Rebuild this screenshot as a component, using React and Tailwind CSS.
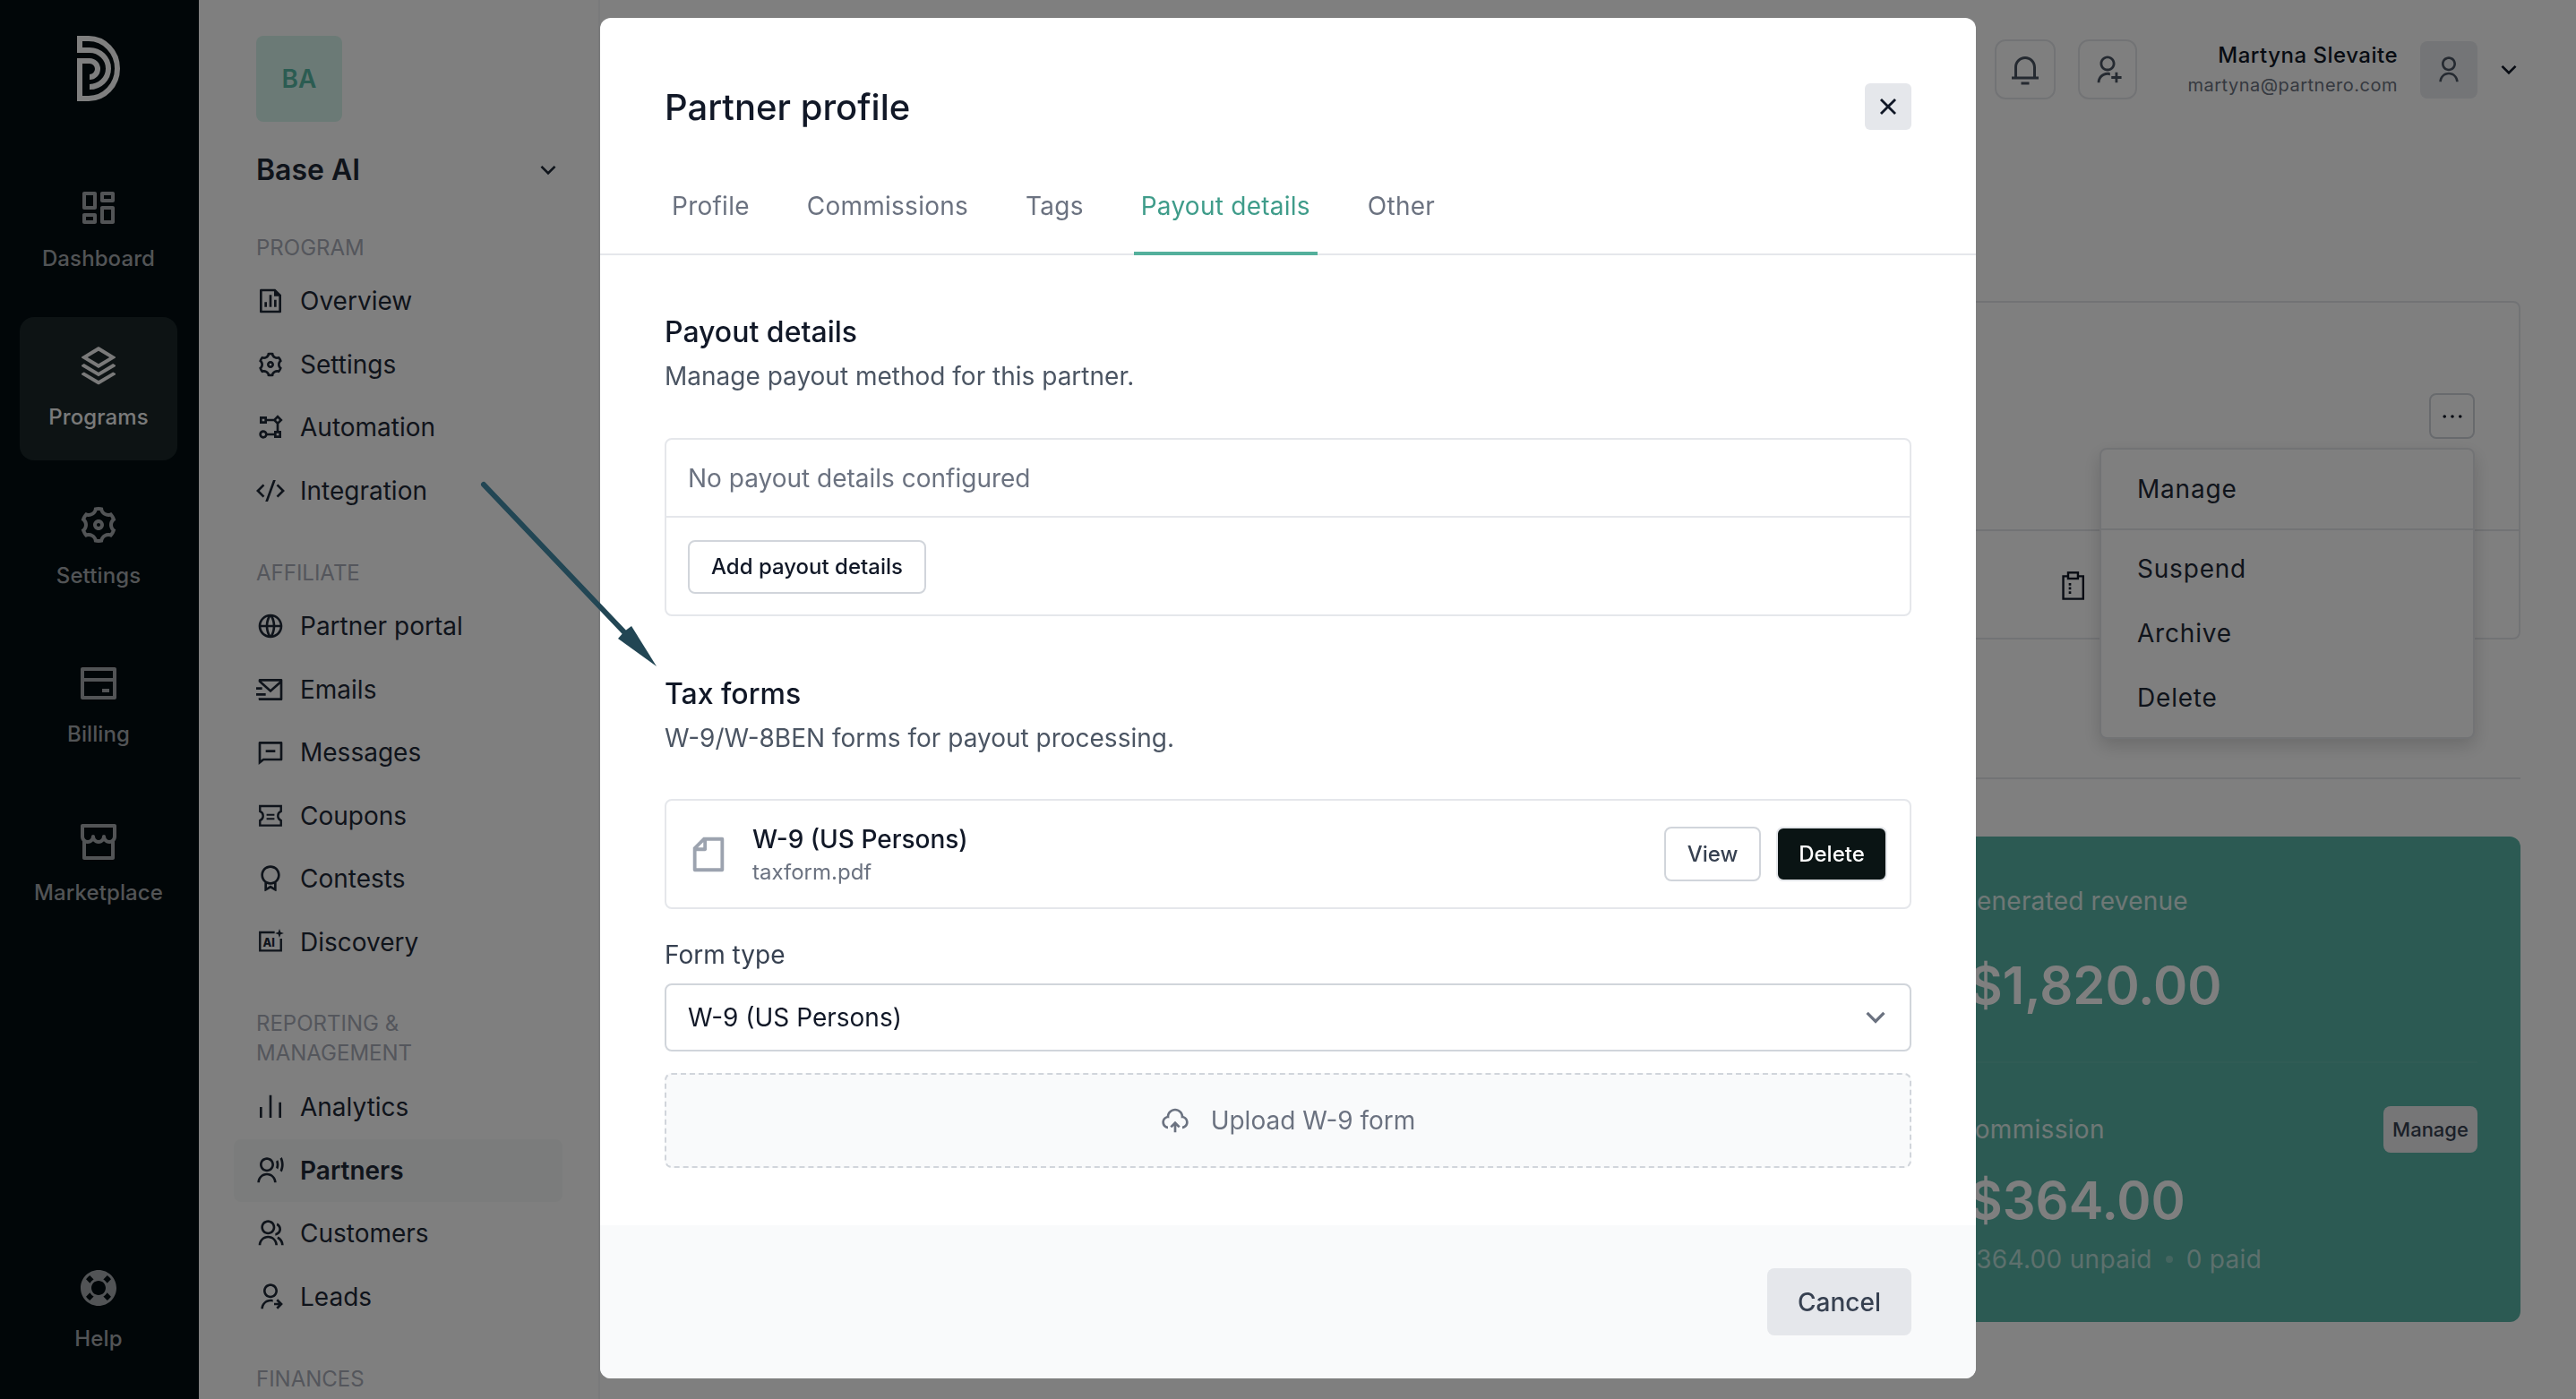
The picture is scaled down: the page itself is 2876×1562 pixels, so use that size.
import React from "react";
import {
  RiDashboardLine, RiStackLine, RiBankCardLine, RiStoreLine, RiLifebuoyFill,
  RiFileChartLine, RiSettings3Line, RiFlowChart, RiCodeSSlashLine, RiGlobalLine, RiMailSendLine,
  RiMessageLine, RiAwardLine, RiBarChartLine, RiUserVoiceLine, RiGroupLine,
  RiUserSharedLine, RiNotification3Line, RiUserAddLine, RiUserLine, RiArrowDownSLine, RiCloseLine,
  RiMoreLine, RiFileLine, RiUploadCloud2Line,
} from "react-icons/ri";

const Logo = () => (
  <svg width="48" height="73" viewBox="0 0 48 73" fill="none" stroke="#ffffff" strokeWidth="6">
    <path d="M13 3H3V16H14A21 20.5 0 0 1 14 57" />
    <path d="M13 3A32 33.5 0 0 1 13 70H3V28H14A9 9 0 0 1 14 46" />
  </svg>
);

const AiIcon = () => (
  <svg width="32" height="32" viewBox="0 0 24 24">
    <path d="M15.5 3.8H3.2V19H20.8V9" fill="none" stroke="currentColor" strokeWidth="1.8" />
    <path d="M19.5 0.8l1 2.7 2.7 1-2.7 1-1 2.7-1-2.7-2.7-1 2.7-1z" fill="currentColor" />
    <text x="5.6" y="15.6" fontSize="9.5" fontWeight="800" fill="currentColor" fontFamily="Inter, sans-serif">AI</text>
  </svg>
);

const CouponIcon = () => (
  <svg width="32" height="32" viewBox="0 0 24 24" fill="none" stroke="currentColor" strokeWidth="1.8">
    <path d="M3.2 3.8H20.8V8.2C19.2 8.8 18.2 10.2 18.2 12S19.2 15.2 20.8 15.8V20H3.2V15.8C4.8 15.2 5.8 13.8 5.8 12S4.8 8.8 3.2 8.2Z" />
    <path d="M8.7 11.1H15.3M8.7 14.4H15.3" strokeWidth="1.6" />
  </svg>
);

const ClipboardIcon = () => (
  <svg width="32" height="32" viewBox="0 0 24 24" fill="none" stroke="currentColor" strokeWidth="1.8">
    <path d="M7.5 4H3.4V23H20.1V4H15.8" />
    <rect x="7.5" y="1" width="8.2" height="5" />
    <path d="M8 10.8h2M8 14.2h2M8 17.7h2" strokeWidth="2" />
  </svg>
);

const railItems = [
  [RiDashboardLine, "Dashboard"],
  [RiStackLine, "Programs", true],
  [RiSettings3Line, "Settings"],
  [RiBankCardLine, "Billing"],
  [RiStoreLine, "Marketplace"],
];

const RailItem = ({ icon: Icon, label, active }) => (
  <div className={`w-[176px] h-[160px] rounded-[16px] flex flex-col items-center pt-[31px] ${active ? "bg-[#1a2729] text-[#f4f4f4]" : "text-[#a4a8ac]"}`}>
    <Icon size={48} />
    <span className="mt-[17px] text-[24px] leading-[32px] font-medium tracking-[0.1px]">{label}</span>
  </div>
);

const SectionLabel = ({ children, className = "" }) => (
  <div className={`pl-[25px] text-[24px] leading-[33px] text-[#a9adb8] uppercase ${className}`}>{children}</div>
);

const NavItem = ({ icon: Icon, label, active }) => (
  <div className={`h-[70.5px] px-[25px] flex items-center gap-[17px] rounded-[8px] text-[28px] text-[#1f2937] ${active ? "bg-[#f7f9f8] font-semibold" : ""}`}>
    <span className="w-[32px] h-[32px] shrink-0 flex items-center justify-center"><Icon size={32} /></span>
    <span>{label}</span>
  </div>
);

const Sidebar = () => (
  <aside className="w-[448px] shrink-0 h-full border-r-2 border-[#f3f4f6] bg-white overflow-hidden">
    <div className="pl-[64px] pt-[40px]">
      <div className="w-[96px] h-[96px] rounded-[8px] bg-[#d6f5ec] flex items-center justify-center text-[#56b8a4] text-[28px] font-semibold">BA</div>
    </div>
    <div className="mt-[34px] pl-[64px] pr-[40px] flex items-center justify-between h-[40px]">
      <span className="text-[32px] font-semibold text-[#1f2937]">Base AI</span>
      <RiArrowDownSLine size={32} className="text-[#1f2937]" />
    </div>
    <div className="ml-[39px] mr-[40px] mt-[50px]">
      <SectionLabel className="mb-[8px]">Program</SectionLabel>
      <NavItem icon={RiFileChartLine} label="Overview" />
      <NavItem icon={RiSettings3Line} label="Settings" />
      <NavItem icon={RiFlowChart} label="Automation" />
      <NavItem icon={RiCodeSSlashLine} label="Integration" />
      <SectionLabel className="mt-[40px] mb-[8px]">Affiliate</SectionLabel>
      <NavItem icon={RiGlobalLine} label="Partner portal" />
      <NavItem icon={RiMailSendLine} label="Emails" />
      <NavItem icon={RiMessageLine} label="Messages" />
      <NavItem icon={CouponIcon} label="Coupons" />
      <NavItem icon={RiAwardLine} label="Contests" />
      <NavItem icon={AiIcon} label="Discovery" />
      <SectionLabel className="mt-[39px] mb-[9px]">Reporting &<br />Management</SectionLabel>
      <NavItem icon={RiBarChartLine} label="Analytics" />
      <NavItem icon={RiUserVoiceLine} label="Partners" active />
      <NavItem icon={RiGroupLine} label="Customers" />
      <NavItem icon={RiUserSharedLine} label="Leads" />
      <SectionLabel className="mt-[40px]">Finances</SectionLabel>
    </div>
  </aside>
);

const Header = () => (
  <header className="h-[336px] pt-[44px] pr-[59px] flex justify-end items-start">
    <div className="flex items-center">
      <button className="w-[68px] h-[67px] rounded-[12px] border-2 border-[#e5e7eb] flex items-center justify-center text-[#4b5563]"><RiNotification3Line size={36} /></button>
      <button className="ml-[25px] w-[66px] h-[67px] rounded-[12px] border-2 border-[#e5e7eb] flex items-center justify-center text-[#4b5563]"><RiUserAddLine size={34} /></button>
      <div className="ml-[56px] flex flex-col items-end">
        <span className="text-[24px] leading-[34px] font-medium text-[#111827] tracking-[0.5px]">Martyna Slevaite</span>
        <span className="text-[20px] leading-[32px] text-[#6b7280] tracking-[0.5px]">martyna@partnero.com</span>
      </div>
      <div className="ml-[25px] w-[64px] h-[64px] rounded-[8px] bg-[#e8eaee] flex items-center justify-center text-[#4b5563]"><RiUserLine size={32} /></div>
      <RiArrowDownSLine size={32} className="ml-[19px] text-[#111827]" />
    </div>
  </header>
);

const Dropdown = () => (
  <div className="absolute top-[162px] right-[49px] w-[419px] h-[325px] rounded-[8px] border-2 border-[#e5e7eb] bg-white shadow-[0_8px_20px_rgba(0,0,0,0.16)] text-[28px] text-[#1f2937] tracking-[0.8px]">
    <div className="h-[88px] px-[40px] flex items-center border-b-2 border-[#e5e7eb] box-content">Manage</div>
    <div className="pt-[7px]">
      <div className="h-[72px] px-[40px] flex items-center">Suspend</div>
      <div className="h-[72px] px-[40px] flex items-center">Archive</div>
      <div className="h-[72px] px-[40px] flex items-center">Delete</div>
    </div>
  </div>
);

const Main = () => (
  <main className="flex-1 h-full overflow-hidden bg-white">
    <Header />
    <div className="pr-[62px]">
      <div className="relative w-[1100px] ml-auto h-[378px] rounded-[8px] border-2 border-[#e5e7eb]">
        <div className="h-[255px] border-b-2 border-[#e5e7eb] pt-[101px] pr-[49px] flex justify-end items-start">
          <button className="w-[51px] h-[51px] rounded-[8px] border-2 border-[#d1d5db] flex items-center justify-center text-[#111827]"><RiMoreLine size={28} /></button>
        </div>
        <div className="pt-[45px] pl-[583px] text-[#111827]"><ClipboardIcon /></div>
        <Dropdown />
      </div>
      <div className="w-[1100px] ml-auto mt-[154px] border-b-2 border-[#e5e7eb]" />
      <div className="w-[678px] ml-auto mt-[64px] h-[542px] rounded-[12px] bg-[#58b4a6] pt-[48px] px-[48px] text-white">
        <div className="ml-[2px] h-[48px] flex items-center text-[28px] text-white/80 tracking-[0.2px]">Generated revenue</div>
        <div className="ml-[14px] mt-[25px] h-[90px] flex items-center text-[58px] font-semibold">$1,820.00</div>
        <div className="mt-[40px] border-b-2 border-white/5" />
        <div className="mt-[48px] h-[52px] flex items-center justify-between">
          <span className="text-[28px] text-white/80 tracking-[0.3px]">Commission</span>
          <span className="w-[105px] h-[52px] rounded-[8px] bg-[#ececee] flex items-center justify-center text-[22px] font-medium text-[#374151]">Manage</span>
        </div>
        <div className="ml-[14px] mt-[8px] h-[90px] flex items-center text-[58px] font-semibold">$364.00</div>
        <div className="ml-[4px] flex items-center gap-[15px] text-[28px] text-white/60 tracking-[0.3px]">
          <span>$364.00 unpaid</span>
          <span className="w-[8px] h-[8px] rounded-full bg-white/30" />
          <span>0 paid</span>
        </div>
      </div>
    </div>
  </main>
);

const Tab = ({ children, active }) => (
  <div className={`h-[75px] -mb-[2px] px-[8px] pt-0 border-b-4 flex items-start ${active ? "border-[#54b09c] text-[#3f9c8a]" : "border-transparent text-[#6b7280]"}`}>
    <span className="h-[40px] flex items-center">{children}</span>
  </div>
);

const H = ({ children, className = "" }) => (
  <div className={`h-[40px] flex items-center text-[32px] font-medium text-[#111827] ${className}`}>{children}</div>
);
const Sub = ({ children, className = "" }) => (
  <div className={`h-[40px] flex items-center text-[28px] text-[#4b5563] ${className}`}>{children}</div>
);

const Modal = () => (
  <div className="fixed inset-0 bg-black/50 flex justify-center items-start pt-[20px]">
    <div className="w-[1536px] h-[1519px] rounded-[12px] bg-white overflow-hidden flex flex-col">
      <div className="h-[52px] box-content px-[72px] pt-[73px] flex items-center justify-between">
        <h2 className="text-[40px] leading-[54px] pt-[1px] font-medium text-[#111827]">Partner profile</h2>
        <button className="w-[52px] h-[52px] rounded-[6px] bg-[#e5e7eb] flex items-center justify-center text-[#111827]"><RiCloseLine size={34} /></button>
      </div>
      <div className="mt-[65px] px-[72px] flex gap-[48px] border-b-2 border-[#e5e7eb] text-[28px] tracking-[0.25px]">
        <Tab>Profile</Tab>
        <Tab>Commissions</Tab>
        <Tab>Tags</Tab>
        <Tab active>Payout details</Tab>
        <Tab>Other</Tab>
      </div>
      <div className="flex-1 px-[72px] pt-[66px]">
        <H>Payout details</H>
        <Sub className="mt-[9px]">Manage payout method for this partner.</Sub>
        <div className="mt-[49px] h-[199px] rounded-[8px] border-2 border-[#e5e7eb]">
          <div className="h-[87px] px-[24px] flex items-center border-b-2 border-[#e5e7eb] text-[28px] text-[#6b7280]">No payout details configured</div>
          <div className="px-[24px] pt-[25px]">
            <button className="h-[60px] w-[266px] rounded-[8px] border-2 border-[#d1d5db] text-[24px] font-medium text-[#111827]">Add payout details</button>
          </div>
        </div>
        <H className="mt-[67px]">Tax forms</H>
        <Sub className="mt-[9px]">W-9/W-8BEN forms for payout processing.</Sub>
        <div className="mt-[48px] h-[123px] rounded-[8px] border-2 border-[#e5e7eb] pl-[24px] pr-[25px] flex items-center">
          <RiFileLine size={46} className="text-[#9ca3af] shrink-0" />
          <div className="ml-[26px] flex-1 flex flex-col">
            <span className="text-[28px] leading-[40px] font-medium text-[#111827]">W-9 (US Persons)</span>
            <span className="text-[24px] leading-[34px] text-[#6b7280]">taxform.pdf</span>
          </div>
          <button className="w-[108px] h-[61px] rounded-[8px] border-2 border-[#d1d5db] text-[24px] font-medium text-[#374151]">View</button>
          <button className="ml-[17px] w-[124px] h-[61px] rounded-[8px] border-2 border-[#e5e7eb] bg-[#0a1414] text-[24px] font-medium text-white">Delete</button>
        </div>
        <div className="mt-[31px] h-[40px] flex items-center text-[28px] text-[#374151]">Form type</div>
        <div className="mt-[12px] h-[76px] rounded-[8px] border-2 border-[#d1d5db] pl-[24px] pr-[18px] flex items-center justify-between text-[28px] text-[#111827]">
          <span>W-9 (US Persons)</span>
          <RiArrowDownSLine size={40} className="text-[#6b7280]" />
        </div>
        <div className="mt-[24px] h-[106px] rounded-[8px] border-2 border-dashed border-[#d1d5db] bg-[#f9fafb] flex items-center justify-center gap-[24px] text-[#6b7280] text-[28px]">
          <RiUploadCloud2Line size={32} />
          <span>Upload W-9 form</span>
        </div>
      </div>
      <div className="h-[171px] bg-[#f9fafb] px-[72px] pt-[48px] flex justify-end items-start">
        <button className="w-[161px] h-[75px] rounded-[8px] bg-[#e5e7eb] text-[28px] font-medium text-[#374151]">Cancel</button>
      </div>
    </div>
  </div>
);

const Arrow = () => (
  <svg className="fixed inset-0 pointer-events-none" width="2876" height="1562" viewBox="0 0 2876 1562">
    <line x1="540" y1="541" x2="698" y2="707" stroke="#224654" strokeWidth="6" strokeLinecap="round" />
    <polygon points="733,744 690,713 697,705 705,699" fill="#224654" />
  </svg>
);

export default function App() {
  return (
    <div className="w-[2876px] h-[1562px] overflow-hidden flex font-['Inter',sans-serif] bg-white relative">
      <nav className="w-[222px] shrink-0 h-full bg-[#020d11] flex flex-col items-center pt-[40px] pr-[2px] pb-[19px]">
        <Logo />
        <div className="mt-[64px] flex flex-col gap-[17px]">
          {railItems.map(([icon, label, active]) => (
            <RailItem key={label} icon={icon} label={label} active={active} />
          ))}
        </div>
        <div className="mt-auto"><RailItem icon={RiLifebuoyFill} label="Help" /></div>
      </nav>
      <Sidebar />
      <Main />
      <Modal />
      <Arrow />
    </div>
  );
}
